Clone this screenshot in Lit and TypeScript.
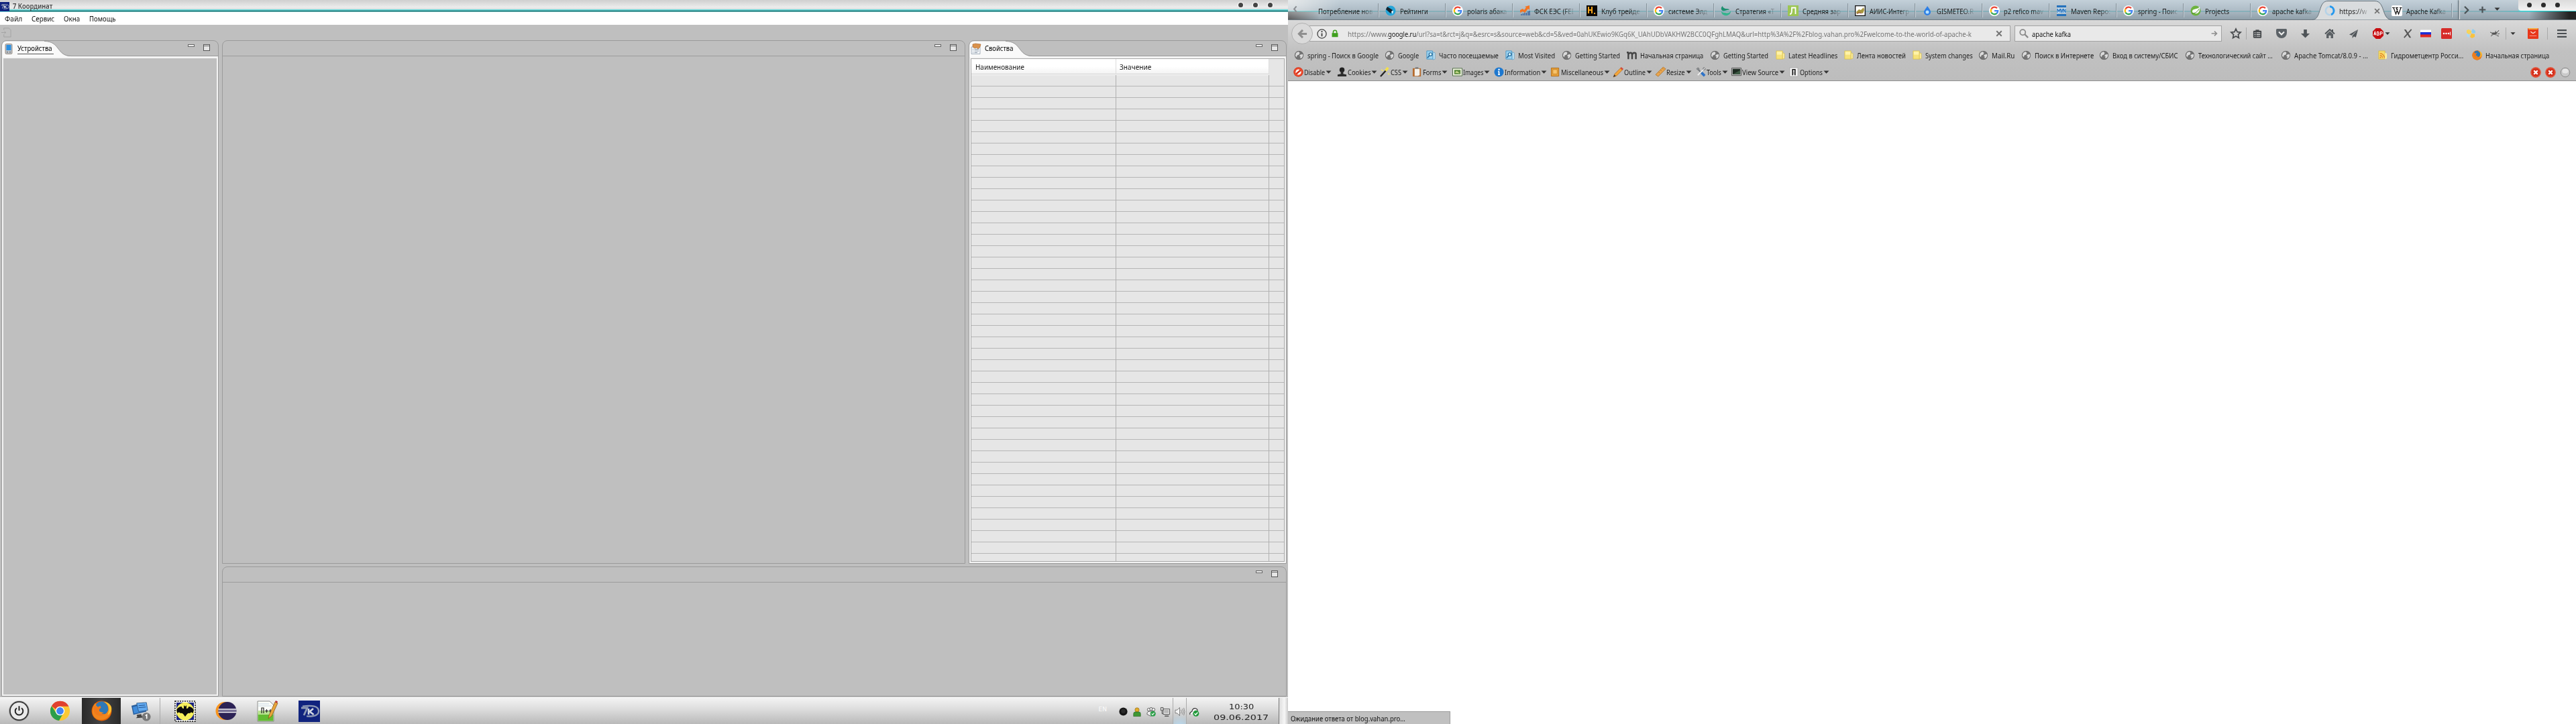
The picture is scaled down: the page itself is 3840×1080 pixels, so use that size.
import { LitElement, html, css, svg, nothing } from "lit";
import { customElement, property } from "lit/decorators.js";
import { styleMap } from "lit/directives/style-map.js";

/** A line of text condensed or widened so that it fills a given width. */
@customElement("fit-text")
class FitText extends LitElement {
  @property({ type: Number }) w = 0;
  @property() text = "";
  static styles = css`
    :host { display: inline-block; white-space: pre; }
    .t { display: inline-block; white-space: pre; transform-origin: 0 50%; }
  `;
  render() {
    return html`<span class="t">${this.text}</span>`;
  }
  updated() {
    const el = this.renderRoot.querySelector(".t") as HTMLElement;
    el.style.transform = "none";
    if (this.w) {
      this.style.width = `${this.w}px`;
      el.style.transform = `scaleX(${this.w / el.offsetWidth})`;
    }
  }
}

const fit = (text: string, w: number) => html`<fit-text .text=${text} .w=${w}></fit-text>`;

const shapes: Record<string, unknown> = {
  none: svg``,
  google: svg`<circle cx="8" cy="8" r="8" fill="#fff"/><g fill="none" stroke-width="2.3"><path d="M12 4.3A5.3 5.3 0 0 0 3.4 5.5" stroke="#ea4335"/><path d="M3.4 5.5a5.3 5.3 0 0 0 0 5" stroke="#fbbc05"/><path d="M3.4 10.5a5.3 5.3 0 0 0 8.2 1.4" stroke="#34a853"/><path d="M11.4 12a5 5 0 0 0 1.8-3.8H8" stroke="#4285f4"/></g>`,
  globe: svg`<circle cx="8" cy="8" r="7" fill="#747474"/><path d="M3 4l4-2 2 2-1 3-3 1-1 3-2-2zM10 7l4-1 .5 3-3 4-2-1 1-2-2-1z" fill="#dadada"/><circle cx="8" cy="8" r="6.6" fill="none" stroke="#666" stroke-width=".8"/>`,
  rate: svg`<circle cx="8" cy="8" r="7.500" fill="#27a5d8"/><path d="M3 2l8 5-3 5-7-6z" fill="#17252e"/><path d="M9 9l3-1-1 5z" fill="#fff"/>`,
  fsk: svg`<path d="M1 11V7l4-2 2 2 3-4-2-1 7-2v7l-2-2-5 6-3-2z" fill="#f47421"/><path d="M3 15v-2M5.500 15v-3M8 15v-4M10.500 15v-4M13 15V9M15 15V8" stroke="#2e5c9e" stroke-width="1.300"/>`,
  club: svg`<path d="M0 0h16v16H0z" fill="#0a0805"/><path d="M3 3v9M8 2v10M3 7h6M2 3h2" stroke="#f6a51c" stroke-width="2" fill="none"/><path d="M11 11h2v2h-2z" fill="#f6a51c"/>`,
  strat: svg`<path d="M3 1C0 3 0 7 3 8c3 1 7-2 10-1-1-3-6-1-8-3-1-1-2-1-2-3z" fill="#1c9070"/><path d="M1 9c0 5 5 7 9 6 3-1 5-3 5-7-2 4-5 4-8 3-2 0-4 0-6-2z" fill="#34b48d"/>`,
  lurk: svg`<path d="M0 0h16v16H0z" fill="#9cc653"/><path d="M3 13c3 0 3-3 3-9.500h5.500V13" fill="none" stroke="#fff" stroke-width="1.800"/>`,
  aiis: svg`<path d="M.7.7h14.600v14.600H.7z" fill="#fff" stroke="#111" stroke-width="1.300"/><path d="M2 10l4-4 3 1 4-4 1 4-2 5-4-1-5 2z" fill="#a8963e"/><path d="M3 12l4-1 3 1" stroke="#9d4b38" fill="none"/>`,
  drop: svg`<path d="M8 1c3 4 5 6 5 9a5 5 0 0 1-10 0c0-3 3-5 5-9z" fill="#2d7fe6"/><circle cx="8" cy="10" r="2.500" fill="#b7e2ff"/>`,
  mvn: svg`<path d="M1 0h14v3H1zM1 13h14v3H1z" fill="#2472bd"/><path d="M1 4h14v8H1z" fill="#c9dff0"/><path d="M2 11V5l2 4 2-4v6M7 5l1.500 6L10 5M11 11V5l3 6V5" fill="none" stroke="#2472bd" stroke-width="1.100"/>`,
  spring: svg`<circle cx="8" cy="8" r="7.500" fill="#6db33f"/><path d="M14 2c1 7-2 11-7 10-2 0-4-1-4-3 0-5 8-2 11-7z" fill="#fff"/><path d="M2 12c5 0 9-2 11-7" stroke="#4d8b2a" fill="none"/>`,
  load: svg`<circle cx="8" cy="8" r="6.200" fill="none" stroke="#b5d3e8" stroke-width="2.600"/><path d="M8 1.800a6.200 6.200 0 0 1 2 12" fill="none" stroke="#2699ee" stroke-width="3"/>`,
  wiki: svg`<rect width="16" height="16" rx="2" fill="#fff"/><path d="M1 3.500h4M6 3.500h4M12 3.500h3.500M3 3.500L6.500 13 9 5M14 3.500L10.500 13 7 3.500" fill="none" stroke="#111" stroke-width="1.200"/>`,
  often: svg`<path d="M2 1h9l1 13H2z" fill="#9bd2f0" stroke="#4a97c4"/><path d="M12 3l3 1v10l-3 1z" fill="#cdeafa" stroke="#4a97c4" stroke-width=".7"/><circle cx="8" cy="6.500" r="2.500" fill="#dff" stroke="#24679a" stroke-width="1.300"/><path d="M6 9l-3 3" stroke="#24679a" stroke-width="1.700"/>`,
  moz: svg`<path d="M2.500 14V3.500M8.500 14V6M14.500 14V6q0-2-2.500-2T8.500 7q0-3-2.500-3T2.500 7M0 3.500h3" fill="none" stroke="#444" stroke-width="2.600"/>`,
  folder: svg`<path d="M2 1h10v13H2z" fill="#f6e27a" stroke="#d8bd45" stroke-width=".7"/><path d="M12 4l3 1v8l-3 1z" fill="#fff0a0" stroke="#cdb33a" stroke-width=".6"/><path d="M3 2h8v5H3z" fill="#fff3a8"/>`,
  rss: svg`<path d="M2 1h10v13H2z" fill="#f6dc6c" stroke="#d1b33b" stroke-width=".7"/><path d="M12 4l3 1v8l-3 1z" fill="#fff0a0"/><path d="M4 5a7 7 0 0 1 7 7M4 8a4 4 0 0 1 4 4" stroke="#e4811c" stroke-width="1.400" fill="none"/><circle cx="4.800" cy="11.300" r="1.100" fill="#e4811c"/>`,
  firefox: svg`<circle cx="8" cy="8" r="7.700" fill="#e66000"/><circle cx="8.500" cy="6.500" r="5.800" fill="#2a6cab"/><path d="M9 1c3 1 4 3 4 6-1 4-4 4-5 3 2 0 2-1 1-2-2 1-3-1-3-2l2-1-2-1-3-2C0 6 0 12 4 14c6 3 12-2 11.500-8-.4-3-3-5-6.500-5z" fill="#f0861e"/><path d="M8 .8c3 1 5.300 3 5 6.500L11 10c-2-1-4-1-5-2l1-2-2-1-1.500-1.500C5 1.500 6 1 8 .8z" fill="#2f79b8"/><path d="M10 1.200c4 2 4.500 6 2.500 10 2.500-1 3.500-4 3-6-.8-2.500-3-4-5.500-4z" fill="#fbc02d"/><path d="M2 4l3 1 2-1 .5 1.500L6 7c-1 3 2 4 4 3-1 3-7 2-8-2z" fill="#f07a1c"/>`,
  ban: svg`<circle cx="8" cy="8" r="7.700" fill="#d6301a"/><circle cx="8" cy="8" r="4.600" fill="#fff"/><path d="M4 11.500L12 4.500" stroke="#d6301a" stroke-width="2.600"/><circle cx="8" cy="8" r="5.600" fill="none" stroke="#ef5130" stroke-width="2"/>`,
  cookie: svg`<circle cx="8" cy="4.500" r="4" fill="#222"/><path d="M6 7h4v4l5 1v3H1v-3l5-1z" fill="#2b2b2b"/>`,
  wand: svg`<path d="M1 15L11 4" stroke="#222" stroke-width="2.400"/><path d="M9 6l4-5" stroke="#f4e04a" stroke-width="4"/><path d="M2 4l3 2M13 10l2 2" stroke="#f7e763" stroke-width="1.600"/>`,
  forms: svg`<path d="M1 2h13v13H1z" fill="#b56b2e"/><path d="M4 3h8v10l-3 1H4z" fill="#f4f1ea"/><path d="M5 0h5v3H5z" fill="#888"/>`,
  images: svg`<path d="M.5 2h15v12H.5z" fill="#f2f4e4" stroke="#47663f"/><path d="M3 4.500h10v7H3z" fill="#5b8c3d"/><path d="M4 9l3-3 5 4z" fill="#c8d88a"/>`,
  info: svg`<circle cx="8" cy="8" r="7.500" fill="#1e78cf"/><path d="M8 7v5M6.500 7H8M6.500 12h3" stroke="#fff" stroke-width="1.800"/><circle cx="8" cy="4" r="1.300" fill="#fff"/>`,
  misc: svg`<path d="M1.500 1.500h12v13h-12z" fill="#e7a038" stroke="#b06c15"/><path d="M4 4h7v7H4z" fill="#f7c36a" stroke="#c07d20" stroke-width=".8"/>`,
  pencil: svg`<path d="M0 16l2-5L12 1l3 3L5 14z" fill="#f2a53a" stroke="#a35a1b" stroke-width=".6"/><path d="M11 2l1.500-2 3.500 3-2 2z" fill="#d34c3c"/><path d="M0 16l1.500-4 2.500 2z" fill="#333"/>`,
  ruler: svg`<path d="M0 12L12 0l4 3L4 15z" fill="#e9a650" stroke="#a96b22" stroke-width=".8"/><path d="M5 8l1.500 1.500M8 5l1.500 1.500M11 2l1.500 1.500" stroke="#8b561c" stroke-width=".7"/>`,
  tools: svg`<path d="M3 3l10 11" stroke="#6d7379" stroke-width="2"/><path d="M14 2L3 13" stroke="#eee" stroke-width="2"/><path d="M9 9l5 5" stroke="#2e73c9" stroke-width="4"/><path d="M1 3l2-2 2 1v2L4 5zM11 4l1-3 2 0M12 5l3-1V2" fill="#8c9298" stroke="#777"/>`,
  screen: svg`<path d="M.5 1.500h15v12H.5z" fill="#bbb" stroke="#555"/><path d="M2 3h12v8.500H2z" fill="#1e2b22"/><path d="M2 11.500L14 5v6.500z" fill="#3c5a43"/>`,
  options: svg`<path d="M1 1h13v14H1z" fill="#f3f3f3" stroke="#aaa"/><path d="M5.500 13V4h4v9" fill="none" stroke="#111" stroke-width="1.600"/><path d="M7.500 7v5" stroke="#777"/>`,
  star: svg`<path d="M8 1l2.100 4.600 5 .6-3.700 3.400 1 5L8 12.100l-4.400 2.500 1-5L.9 6.200l5-.6z" fill="none" stroke="#46494c" stroke-width="1.700"/>`,
  clip: svg`<rect x="1" y="2.500" width="14" height="12.500" rx="1.500" fill="#46494c"/><path d="M5 1h6v3H5z" fill="#46494c"/><path d="M3 6h2M6.500 6H13M3 9h2M6.500 9H13M3 12h2M6.500 12H13" stroke="#dcdcdc" stroke-width="1.400"/>`,
  pocket: svg`<path d="M0 2.500Q0 1 1.500 1h13Q16 1 16 2.500V7a8 8 0 0 1-16 0z" fill="#5c6267"/><path d="M4 5.500l4 4 4-4" fill="none" stroke="#eee" stroke-width="2"/>`,
  down: svg`<path d="M5.500 1h5v6.500H15L8 14.500 1 7.500h4.500z" fill="#4f5458"/>`,
  home: svg`<path d="M1 8.500L8 2l7 6.500" fill="none" stroke="#4f5458" stroke-width="2"/><path d="M3 9l5-4.500L13 9v6H9.500v-4h-3v4H3z" fill="#5c6165"/><path d="M11 2h2v4l-2-2z" fill="#4f5458"/>`,
  send: svg`<path d="M15 1L1 9l4 1.500zM15 1L6 11v4l2.500-3 3 1.500z" fill="#505559"/>`,
  abp: svg`<path d="M4.800 0h6.400L16 4.800v6.400L11.200 16H4.800L0 11.200V4.800z" fill="#c70d10"/><path d="M1.800 10.500L3.300 5.500l1.500 5M2.300 9h2M6.500 5.500v5H8q1.500 0 1.500-1.300T8 8q1.200 0 1.200-1.200T8 5.500zM11.500 10.500v-5H13q1.300 0 1.300 1.400T13 8.300h-1.500" fill="none" stroke="#fff" stroke-width="1.100"/>`,
  ex: svg`<path d="M2 1l3 0 9 14h-3z" fill="#555"/><path d="M14.500 1L2 15" stroke="#555" stroke-width="2"/>`,
  flag: svg`<path d="M0 2.500h16v4H0z" fill="#fff"/><path d="M0 6h16v4H0z" fill="#1d2fd6"/><path d="M0 9.500h16v4H0z" fill="#e02a22"/>`,
  dots: svg`<rect width="16" height="16" rx="1.500" fill="#d62b28"/><g fill="#fff"><circle cx="4" cy="8" r="1.300"/><circle cx="7.500" cy="8" r="1.300"/><circle cx="11" cy="8" r="1.300"/><path d="M13 5.500h1v5h-1z"/></g>`,
  cubes: svg`<path d="M5 2l4 2v4L5 9 2 7V3z" fill="#f7d45a"/><path d="M11 1l4 3v3l-4 1-2-3z" fill="#8fcdf0"/><path d="M2 8l4 2v4l-4-2z" fill="#a9d8f5"/><path d="M9 8l5 1v4l-4 2-3-2z" fill="#f9c23c"/>`,
  bug: svg`<path d="M3 9l5-2 4-1 2-3M5 6l3 4M9 4l1 7M2 12l4-3M1 6l5 2M12 9l3-1M11 11l3 1" fill="none" stroke="#555" stroke-width="1"/><path d="M4 9q3-4 8-2-3 4-8 2z" fill="#555"/>`,
  ali: svg`<rect width="16" height="16" rx="1" fill="#e8371b"/><path d="M1 0h14v2H1z" fill="#f7a63a"/><path d="M4.500 5q3.500 5 7 0" fill="none" stroke="#fff" stroke-width="1.300"/><path d="M3 11.500h10" stroke="#fbb" stroke-width="1.200" stroke-dasharray="1.500 .6"/>`,
  menu: svg`<path d="M0 2.500h16M0 8h16M0 13.500h16" stroke="#4a4e51" stroke-width="2.500"/>`,
  err: svg`<circle cx="8" cy="8" r="7.700" fill="#d4301c"/><circle cx="8" cy="8" r="7" fill="none" stroke="#ef6a4b"/><path d="M5.300 5.300l5.400 5.400M10.700 5.300l-5.400 5.400" stroke="#fff" stroke-width="2.200"/>`,
  grey: svg`<circle cx="8" cy="8" r="6.800" fill="#c9c9c9" stroke="#8b8b8b"/><ellipse cx="8" cy="6" rx="4.500" ry="3.500" fill="#e6e6e6"/>`,
  caret: svg`<path d="M1 4.500h14L8 12z" fill="#333"/>`,
  right: svg`<path d="M1 8h12M8 2.500L13.500 8 8 13.500" fill="none" stroke="#8d8d8d" stroke-width="2.600"/>`,
  left: svg`<path d="M15 8H3M8.500 2L2.500 8l6 6" fill="none" stroke="#8f8f8f" stroke-width="3.200"/>`,
  chevL: svg`<path d="M11 2L6 8l5 6" fill="none" stroke="#8b9094" stroke-width="3"/>`,
  chevR: svg`<path d="M4 1l7 7-7 7" fill="none" stroke="#4b5357" stroke-width="3"/>`,
  plus: svg`<path d="M8 1v14M1 8h14" stroke="#4b5357" stroke-width="3.200"/>`,
  cross: svg`<path d="M2 2l12 12M14 2L2 14" stroke="#737373" stroke-width="3"/>`,
  lens: svg`<circle cx="6" cy="6" r="4.600" fill="none" stroke="#8a8a8a" stroke-width="2"/><path d="M9.500 9.500l5.500 5.500" stroke="#8a8a8a" stroke-width="2.600"/>`,
  site: svg`<circle cx="8" cy="8" r="7" fill="none" stroke="#444" stroke-width="1.400"/><path d="M8 7v5" stroke="#444" stroke-width="2"/><circle cx="8" cy="4.500" r="1.200" fill="#444"/>`,
  lock: svg`<path d="M2 7h12v8H2z" fill="#3fa01e"/><path d="M4.500 8V5a3.500 3.500 0 0 1 7 0v3" fill="none" stroke="#3fa01e" stroke-width="2"/>`,
  pda: svg`<rect x="3" y=".5" width="10" height="15" rx="1.500" fill="#b9c0c8" stroke="#8c7a68" stroke-width=".8"/><path d="M4.500 2h7v8h-7z" fill="#2c8fe0"/><circle cx="6" cy="12.800" r="1" fill="#777"/><circle cx="10" cy="12.800" r="1" fill="#777"/>`,
  props: svg`<path d="M1 5h13v10.500H1z" fill="#f2f5f8" stroke="#93a0ad" stroke-width=".8"/><path d="M3 8.500h1M5.500 8.500H12M3 11h1M5.500 11H12M3 13.500h1M5.500 13.500H10" stroke="#8a98a8"/><path d="M3 1l4-1 8 1-1 4-3 3-2-2-3 1-3-2z" fill="#d9924c" stroke="#a9632a" stroke-width=".6"/>`,
  exit: svg`<path d="M4 4V1h8l3 3v11H4v-4M0 8h7M5 6l2 2-2 2" fill="none" stroke="#a2a2a2"/>`,
  seven: svg`<path d="M0 0h16v16H0z" fill="#10237e"/><path d="M2 5.500h4.500L4 11" fill="none" stroke="#8e9ab5" stroke-width="1.400"/><path d="M7.500 6v4.500M11 6L8.300 8.200l3 2.300" fill="none" stroke="#d0d6e2" stroke-width="1.300"/><path d="M3 4.300q11.500-1.500 12 3.200T6 11.700" fill="none" stroke="#8e9ab5" stroke-width="1.200"/>`,
  power: svg`<circle cx="16" cy="16" r="15.800" fill="#000" opacity=".25"/><circle cx="16" cy="16" r="14" fill="#e9e9e9" stroke="#333" stroke-width="1.800"/><path d="M12.300 11.500a6 6 0 1 0 7.400 0M16 8.500v7" fill="none" stroke="#222" stroke-width="2"/>`,
  chrome: svg`<circle cx="16" cy="16" r="15" fill="#fbc934"/><path d="M3 8.500A15 15 0 0 1 29.500 9H16a7 7 0 0 0-6.500 4.500z" fill="#e0412f"/><path d="M3 8.500A15 15 0 0 0 14.500 31l6-10.500a7 7 0 0 1-10.500-1.500z" fill="#2c9e4b"/><circle cx="16" cy="16" r="7" fill="#fff"/><circle cx="16" cy="16" r="5.600" fill="#4285f4"/>`,
  remote: svg`<path d="M2 8l19-5 4 14-20 5z" fill="#295e9c"/><path d="M4 10l16-4 3 10-17 4z" fill="#3f8bda"/><path d="M10 4l15-1 2 12-14 2z" fill="#62aaf0" stroke="#264f7c" stroke-width=".8"/><path d="M13 8l10-1M13 11l11-1" stroke="#1f5190"/><path d="M10 22l7-1 1 3 5 2-14 1 2-2z" fill="#444"/><circle cx="25" cy="25" r="6.500" fill="#777"/><path d="M23.500 23.300l2-1.500V28" fill="none" stroke="#fff" stroke-width="1.700"/>`,
  bat: svg`<path d="M1 1h30v30H1z" fill="#fff" stroke="#111" stroke-width="1.600" stroke-dasharray="2 1.500"/><path d="M3 3h26v26H3z" fill="#1a237e"/><circle cx="16" cy="16" r="13.300" fill="#f6ef5c"/><path d="M3 14q3-5 8-5 0 3 3 3V7l2 2 2-2v5q3 0 3-3 5 0 8 5-1 3-1 5-3-3-5 0-2-1-4 1l-3 4-3-4q-2-2-4-1-2-3-5 0 0-2-1-5z" fill="#0b0b0b"/>`,
  eclipse: svg`<circle cx="14" cy="16" r="14" fill="#f7941e"/><circle cx="18" cy="16" r="14" fill="#2c2255"/><path d="M4 13.500h28M4 18h28" stroke="#fff" stroke-width="1.600"/><path d="M4 15.700h28" stroke="#c9c5dd" stroke-width="1"/>`,
  npp: svg`<path d="M1 1h18l6 6v24H1z" fill="#fbfdf8" stroke="#777" stroke-width=".8"/><path d="M1.500 18h23v12.500h-23z" fill="#62bb32"/><path d="M1.500 15h23v6h-23z" fill="#b8e290"/><path d="M2 5h16M2 8h20" stroke="#bcd" stroke-width=".8"/><path d="M7 19v-8h3v8M12 15.500h5M14.500 13v5M18 15.500h4M20 13v5" fill="none" stroke="#222" stroke-width="1.200"/><path d="M17 27l1-5L27 2l4 2-9 19z" fill="#e8a53b" stroke="#805018" stroke-width=".7"/><path d="M27 2l1-2 3 1.500-1 2.500z" fill="#b33"/>`,
  blob: svg`<circle cx="8" cy="8" r="7.500" fill="#161616"/><circle cx="8" cy="7" r="4" fill="#2b2b2b"/>`,
  man: svg`<circle cx="8" cy="4.500" r="3.600" fill="#e2ab2c" stroke="#87640e" stroke-width=".7"/><path d="M2 15.500V11q0-3 3-3h6q3 0 3 3v4.500z" fill="#3f9834" stroke="#245e1e" stroke-width=".7"/>`,
  group: svg`<g fill="#eee" stroke="#555"><circle cx="4" cy="4" r="2.500"/><circle cx="8" cy="3" r="2.500"/><circle cx="12" cy="4" r="2.500"/><path d="M1 12q0-5 4-5h6q4 0 4 5-4 3-8 3z"/></g><circle cx="11" cy="11" r="4.500" fill="#2da04a"/><path d="M8.800 11l1.700 1.700 2.800-3.200" stroke="#fff" fill="none" stroke-width="1.300"/>`,
  net: svg`<path d="M4.500 3h11v9h-11z" fill="#eee" stroke="#444"/><path d="M6 4.500h8V10H6z" fill="#b9b9b9"/><path d="M7 15h7" stroke="#444" stroke-width="1.600"/><path d="M.5.500h4v5h-4z" fill="#ddd" stroke="#444"/><path d="M2.500 6v5h2" fill="none" stroke="#444"/>`,
  sound: svg`<path d="M1 5.500h3L8 1.500v13l-4-4H1z" fill="#f4f4f4" stroke="#777"/><path d="M10 5q2 3 0 6M12.300 3.500q3 4.500 0 9M14.500 2q3 6 0 12" fill="none" stroke="#888"/>`,
  cloud: svg`<path d="M1 13q-1-4 3-5 1-6 6-5 3 1 3 4" fill="#f3f3f3" stroke="#333" stroke-width="1.200"/><circle cx="10.500" cy="11" r="4.800" fill="#229a3b"/><path d="M8 11l2 2 3.200-3.600" stroke="#fff" fill="none" stroke-width="1.500"/>`,
};

const big = new Set(["power", "chrome", "remote", "bat", "eclipse", "npp"]);
const icon = (name: string, w = 16, h = w) => {
  const s = big.has(name) ? 32 : 16;
  return html`<svg class="ic" width=${w} height=${h} viewBox="0 0 ${s} ${s}">${shapes[name]}</svg>`;
};

const base = css`
  * { box-sizing: border-box; }
  .ic { display: block; flex: none; overflow: visible; }
  fit-text { flex: none; }
`;

@customElement("view-panel")
class ViewPanel extends LitElement {
  @property() label = "";
  @property() glyph = "";
  @property({ type: Number }) tab = 0;
  @property({ type: Number }) lw = 0;
  @property({ type: Boolean }) underline = false;
  static styles = [base, css`
    :host { display: flex; flex-direction: column; border: 1px solid #9b9b9b; border-radius: 8px 8px 0 0; overflow: hidden; box-sizing: border-box; background: #bfbfbf; }
    .head { height: 23px; flex: none; border-bottom: 1px solid #9b9b9b; display: flex; position: relative; }
    .curve { position: absolute; left: 0; top: 0; }
    .tab { position: relative; display: flex; align-items: center; gap: 5px; padding: 1px 0 0 2px; color: #000; font-size: 11px; }
    .label { line-height: 15px; border-bottom: 1px solid transparent; height: 17px; padding-right: 2px; }
    .label.u { border-color: #555; }
    .btns { margin-left: auto; display: flex; gap: 13px; padding: 5px 12px 0 0; }
    .min { width: 10px; height: 4px; border: 1px solid #666; background: #eee; }
    .max { width: 10px; height: 10px; border: 1px solid #555; background: #e6e6e6; box-shadow: inset 0 1px #eee, inset 0 2px #666; }
    .body { flex: 1; min-height: 0; display: flex; }
    .body.framed { border: 2px solid #f4f4f4; border-top-width: 3px; }
    ::slotted(*) { flex: 1; }
  `];
  render() {
    const t = this.tab;
    return html`
      <div class="head">
        ${t ? html`<svg class="curve" width=${t + 4} height="24"><path d="M0 24V6Q0 .5 7 .5H${t - 38}C${t - 14} .5 ${t - 20} 23 ${t + 2} 23V24z" fill="#f9f9f9"/><path d="M${t - 38} .5C${t - 14} .5 ${t - 20} 22.500 ${t + 2} 22.500" fill="none" stroke="#999"/></svg>
          <div class="tab">${icon(this.glyph)}<span class="label ${this.underline ? "u" : ""}">${fit(this.label, this.lw)}</span></div>` : nothing}
        <div class="btns"><div class="min"></div><div class="max"></div></div>
      </div>
      <div class="body ${t ? "framed" : ""}"><slot></slot></div>`;
  }
}

@customElement("coord-window")
class CoordWindow extends LitElement {
  static styles = [base, css`
    :host { display: flex; flex-direction: column; width: 1920px; height: 1040px; background: #bfbfbf; font-family: "Noto Sans", "Open Sans", sans-serif; font-size: 11px; color: #222; }
    .title { height: 18px; flex: none; display: flex; align-items: center; background: linear-gradient(#cfcfcf, #ececec 60%, #d9dede 14px, #60d4d6 14px, #60d4d6 16px, #0e3a3a 16px, #0e4040 17px, #7be0e0 17px); padding-bottom: 1px; font-weight: 600; font-size: 11.5px; color: #444; gap: 5px; }
    .title .ic { margin-top: 2px; }
    .dots { margin-left: auto; display: flex; gap: 15px; padding: 0 23px 2px 0; }
    .dot { width: 7px; height: 7px; border-radius: 50%; background: #444; box-shadow: 0 0 1px 1px #fff; }
    .menu { height: 19px; flex: none; background: #fff; display: flex; align-items: center; padding: 0 0 0 7px; gap: 14px; font-size: 11px; color: #111; }
    .tools { height: 23px; flex: none; padding: 4px 0 0 2px; }
    .work { flex: 1; min-height: 0; display: flex; gap: 5px; padding: 0 2px 1px; }
    .dev { width: 324px; }
    .main { flex: 1; display: flex; flex-direction: column; gap: 4px; }
    .row { height: 781px; display: flex; gap: 5px; }
    .edit { width: 1108px; }
    .prop { flex: 1; }
    .log { flex: 1; }
    .grid { border: 1px solid #a9a9a9; background: #e6e6e6; display: grid; grid-template-columns: 216px 228px 1fr; grid-template-rows: 24px 1fr; }
    .th { background: linear-gradient(#fff 50%, #f1f1f1); border-bottom: 1px solid #fff; box-shadow: inset 0 -1px #ccc; padding: 4px 0 0 6px; line-height: 16px; border-right: 1px solid #ddd; }
    .th + .th { padding-left: 5px; }
    .th.last { background: #e6e6e6; box-shadow: none; border: 0; }
    .td { background: repeating-linear-gradient(#e6e6e6 0 16px, #b6b6b6 16px 17px); border-right: 1px solid #b0b0b0; }
    .td.last { border-right: 0; }
  `];
  render() {
    return html`
      <div class="title">${icon("seven", 14, 14)}${fit("7 Координат", 59)}
        <div class="dots">${[1, 2, 3].map(() => html`<div class="dot"></div>`)}</div></div>
      <div class="menu">${fit("Файл", 26)}${fit("Сервис", 34)}${fit("Окна", 24)}${fit("Помощь", 39)}</div>
      <div class="tools">${icon("exit", 15, 15)}</div>
      <div class="work">
        <view-panel class="dev" label="Устройства" glyph="pda" .tab=${101} .lw=${52} underline></view-panel>
        <div class="main">
          <div class="row">
            <view-panel class="edit"></view-panel>
            <view-panel class="prop" label="Свойства" glyph="props" .tab=${92} .lw=${42}>
              <div class="grid">
                <div class="th">${fit("Наименование", 73)}</div><div class="th">${fit("Значение", 47)}</div><div class="th last"></div>
                <div class="td"></div><div class="td"></div><div class="td last"></div>
              </div>
            </view-panel>
          </div>
          <view-panel class="log"></view-panel>
        </div>
      </div>`;
  }
}

@customElement("task-bar")
class TaskBar extends LitElement {
  static styles = [base, css`
    :host { display: flex; height: 40px; width: 1920px; background: linear-gradient(#f3f3f3, #dcdcdc 45%, #b9b9b9); font-family: "DejaVu Sans", sans-serif; color: #222; border-top: 1px solid #fafafa; box-sizing: border-box; }
    .app { display: flex; align-items: center; justify-content: center; width: 58px; height: 39px; }
    .start { width: 56px; }
    .app.active { background: linear-gradient(90deg, #2a2a2a, #444 50%, #2a2a2a); margin: 0 0 0 4px; }
    .first { margin-left: 4px; }
    .sep { width: 1px; background: #aaa; margin-right: 7.5px; }
    .sp { margin-right: 3.7px; }
    .tray { margin-left: auto; display: flex; align-items: center; gap: 7px; padding-top: 2px; }
    .lang { font-size: 9px; color: #fafafa; margin-right: 11px; padding-bottom: 8px; }
    .snd { background: radial-gradient(circle at 50% 115%, #b9e0fa, transparent 45%); align-self: stretch; display: flex; align-items: center; border: solid #aaa; border-width: 0 1px; margin: -2px -3px 0; padding: 2px 2px 0; }
    .clock { display: flex; flex-direction: column; align-items: center; width: 84px; margin: 0 14px 0 13px; font-size: 10.5px; line-height: 16px; }
    .show { width: 14px; border-left: 1px solid #777; background: linear-gradient(90deg, #ddd, #f6f6f6 60%, #ccc); }
  `];
  render() {
    return html`
      <div class="app start">${icon("power", 31)}</div>
      <div class="app first">${icon("chrome", 31)}</div>
      <div class="app active">${icon("firefox", 31)}</div>
      <div class="app">${icon("remote", 31)}</div>
      <div class="sep"></div>
      <div class="app sp">${icon("bat", 32)}</div>
      <div class="app sp">${icon("eclipse", 32, 31)}</div>
      <div class="app sp">${icon("npp", 32)}</div>
      <div class="app">${icon("seven", 32)}</div>
      <div class="tray">
        <span class="lang">EN</span>${icon("blob", 13)}
        ${icon("man", 14)}${icon("group", 14)}${icon("net", 14)}
        <span class="snd">${icon("sound", 15)}</span>${icon("cloud", 15)}
        <div class="clock">${fit("10:30", 37)}${fit("09.06.2017", 82)}</div>
      </div>
      <div class="show"></div>`;
  }
}

type Item = [string, string, number, number];

/* glyph, caption, caption width */
const tabs: [string, string, number][] = [
  ["rate", "Рейтинги", 42], ["google", "polaris абака", 59], ["fsk", "ФСК ЕЭС (FEI", 59], ["club", "Клуб трейде", 58],
  ["google", "системе Элд", 58], ["strat", "Стратегия «Т", 58], ["lurk", "Средняя зар", 57], ["aiis", "АИИС-Интегр", 59],
  ["drop", "GISMETEO.R", 55], ["google", "p2 refico mav", 59], ["mvn", "Maven Repo:", 59], ["google", "spring - Поис", 59],
  ["spring", "Projects", 36], ["google", "apache kafka", 59],
];

/* glyph, caption, caption width, item pitch */
const marks: Item[] = [
  ["globe", "spring - Поиск в Google", 106, 135], ["globe", "Google", 31, 61], ["often", "Часто посещаемые", 89, 118],
  ["often", "Most Visited", 55, 85], ["globe", "Getting Started", 67, 96.5], ["moz", "Начальная страница", 94, 124.5],
  ["globe", "Getting Started", 67, 97], ["folder", "Latest Headlines", 73, 102], ["folder", "Лента новостей", 73, 102],
  ["folder", "System changes", 71, 99], ["globe", "Mail.Ru", 34, 63.5], ["globe", "Поиск в Интернете", 88, 116.5],
  ["globe", "Вход в систему/СБИС", 98, 128], ["globe", "Технологический сайт ...", 111, 143],
  ["globe", "Apache Tomcat/8.0.9 - ...", 110, 144], ["rss", "Гидрометцентр Росси...", 108, 141], ["firefox", "Начальная страница", 95, 130],
];

const devtools: Item[] = [
  ["ban", "Disable", 31, 64.5], ["cookie", "Cookies", 34, 64.5], ["wand", "CSS", 16, 48], ["forms", "Forms", 27, 59.5],
  ["images", "Images", 30, 62], ["info", "Information", 53, 84], ["misc", "Miscellaneous", 63, 94], ["pencil", "Outline", 32, 63.5],
  ["ruler", "Resize", 28, 59.5], ["tools", "Tools", 22, 53.5], ["screen", "View Source", 54, 85.5], ["options", "Options", 34, 60],
];

@customElement("fox-window")
class FoxWindow extends LitElement {
  static styles = [base, css`
    :host { display: flex; flex-direction: column; width: 1920px; height: 1080px; background: #fff; font-family: "Noto Sans", "Open Sans", sans-serif; font-size: 11px; color: #1c1c1c; }
    .strip { height: 30px; flex: none; display: flex; position: relative; border-bottom: 1px solid #6c7880;
      background: radial-gradient(ellipse 80px 40px at 0 0, #e6e9ea, transparent), linear-gradient(90deg, #222 0, rgba(34,34,34,0) 48px, rgba(34,34,34,0) 1850px, #222 1910px) 0 17px / 100% 13px no-repeat, linear-gradient(90deg, #19d3d3, rgba(70,160,170,.35) 70px, rgba(70,160,170,.35) 1800px, #19d3d3) 0 16px / 100% 2px no-repeat, linear-gradient(#c3d0d9, #afbdc7 50%, #8f9fa9); }
    .scroll { width: 35px; padding: 8px 0 0 5px; }
    .tab { width: 100px; display: flex; align-items: center; gap: 6px; padding: 3px 0 0 10px; position: relative; }
    .tab::after { content: ""; position: absolute; right: 0; top: 5px; bottom: 3px; width: 1px; background: #87949d; box-shadow: 1px 0 #c3ced5; }
    .cap { flex: none; }
    .cap.long { -webkit-mask-image: linear-gradient(270deg, rgba(0,0,0,.15), #000 16px); mask-image: linear-gradient(270deg, rgba(0,0,0,.15), #000 16px); }
    .active::after, .pre::after { display: none; }
    .active > * { position: relative; }
    .active .shape { position: absolute; left: -8px; top: 0; }
    .active .x { margin-left: 4px; }
    .after { display: flex; align-items: flex-start; gap: 12px; padding: 9px 0 0 4px; border-left: 1px solid #e3e8ea; margin-left: 11px; box-shadow: -2px 0 2px #77848c; }
    .wc { position: absolute; right: 0; top: 0; width: 86px; height: 17px; background: linear-gradient(#dcdcdc, #f2f2f2); border-bottom: 1px solid #3ce0e0; border-bottom-left-radius: 4px; display: flex; gap: 14px; padding: 4px 0 0 13px; }
    .dot { width: 7px; height: 7px; border-radius: 50%; background: #2c2c2c; }
    .chrome { height: 91px; flex: none; background: linear-gradient(#d9d9d9, #c1c1c1 45px, #bdbdbd); border-bottom: 1px solid #8e8e8e; display: flex; flex-direction: column; }
    .nav { height: 40px; display: flex; align-items: center; padding-left: 5px; }
    .back { width: 32px; height: 32px; border-radius: 50%; border: 1px solid #b1b1b1; background: #dadada; display: flex; align-items: center; justify-content: center; position: relative; z-index: 1; }
    .url { height: 24px; width: 1045px; margin-left: -5px; border: 1px solid #a3a3a3; background: #e9e9e9; display: flex; align-items: center; padding: 0 11px 0 10px; color: #757575; }
    .url .lk { margin: 0 13px 0 6px; }
    .url b { font-weight: normal; color: #111; }
    .url .stop { margin-left: auto; }
    .find { height: 24px; width: 309px; margin-left: 6px; border: 1px solid #a3a3a3; background: #e9e9e9; display: flex; align-items: center; padding: 0 5px 0 6px; gap: 5px; color: #111; }
    .find .go { margin-left: auto; }
    .acts { flex: 1; display: grid; align-items: center; justify-items: center; margin-left: 10px; grid-template-columns: 22px 9px 23px 49px 23px 49px 23px 15px 19px 10px 14px 22px 32px 30px 42px 30px 2px 20px 40px 2px 1fr; }
    .v { width: 1px; height: 18px; background: #a9a9a9; }
    .marks { height: 24px; display: flex; align-items: center; padding: 0 0 1px 9px; margin-top: 1px; }
    .mark { display: flex; align-items: center; gap: 5px; flex: none; }
    .devs { height: 25px; display: flex; align-items: center; padding-left: 8px; }
    .dev { display: flex; align-items: center; gap: 1px; flex: none; }
    .errs { margin-left: auto; display: flex; gap: 6px; padding-right: 8px; }
    .page { flex: 1; display: flex; align-items: flex-end; }
    .status { width: 242px; height: 19px; background: #c0c0c0; border: 1px solid #9c9c9c; border-width: 1px 1px 0 0; padding: 2px 0 0 4px; line-height: 16px; color: #111; }
  `];
  private wide(w: number) {
    return styleMap({ width: `${w}px` });
  }
  private cap(text: string, w: number) {
    return html`<span class="cap ${w > 50 ? "long" : ""}">${fit(text, w)}</span>`;
  }
  render() {
    return html`
      <div class="strip">
        <div class="scroll">${icon("chevL", 11)}</div>
        <div class="tab">${this.cap("Потребление нов", 81)}</div>
        ${tabs.map(([g, t, w], i) => html`<div class="tab ${i === tabs.length - 1 ? "pre" : ""}">${icon(g)}${this.cap(t, w)}</div>`)}
        <div class="tab active">
          <svg class="shape" width="118" height="30"><path d="M0 29.500C14 29 8 1.500 23 1.500H93C109 1.500 103 29 118 29.500V30H0z" fill="#d9dcde" stroke="#65727a" stroke-width="1"/></svg>
          ${icon("load")}<span class="cap long">${fit("https://w", 42)}</span><span class="x">${icon("cross", 9)}</span>
        </div>
        <div class="tab">${icon("wiki")}${this.cap("Apache Kafka", 59)}</div>
        <div class="after">${icon("chevR", 12)}${icon("plus", 11)}${icon("caret", 9)}</div>
        <div class="wc"><div class="dot"></div><div class="dot"></div><div class="dot"></div></div>
      </div>
      <div class="chrome">
        <div class="nav">
          <div class="back">${icon("left", 15)}</div>
          <div class="url">${icon("site", 15)}<span class="lk">${icon("lock", 12)}</span>${fit("https://www.", 60)}<b>${fit("google.ru", 42)}</b>${fit("/url?sa=t&rct=j&q=&esrc=s&source=web&cd=5&ved=0ahUKEwio9KGq6K_UAhUDbVAKHW2BCC0QFghLMAQ&url=http%3A%2F%2Fblog.vahan.pro%2Fwelcome-to-the-world-of-apache-k", 828)}
            <span class="stop">${icon("cross", 10)}</span></div>
          <div class="find">${icon("lens", 14)}${fit("apache kafka", 58)}<span class="go">${icon("right", 10)}</span></div>
          <div class="acts">${icon("star")}<i class="v"></i>${icon("clip", 14, 15)}${icon("pocket")}${icon("down", 15)}${icon("home")}${icon("send", 15)}<i></i>${icon("abp")}${icon("caret", 8)}<i></i>${icon("ex", 14)}${icon("flag")}${icon("dots")}${icon("cubes")}${icon("bug")}<i class="v"></i>${icon("caret", 8)}${icon("ali")}<i class="v"></i>${icon("menu", 16, 14)}</div>
        </div>
        <div class="marks">${marks.map(([g, t, w, p]) => html`<div class="mark" style=${this.wide(p)}>${icon(g, 15)}${fit(t, w)}</div>`)}</div>
        <div class="devs">
          ${devtools.map(([g, t, w, p]) => html`<div class="dev" style=${this.wide(p)}>${icon(g, 15)}${fit(t, w)}${icon("caret", 9)}</div>`)}
          <div class="errs">${icon("err")}${icon("err")}${icon("grey")}</div>
        </div>
      </div>
      <div class="page"><div class="status">${fit("Ожидание ответа от blog.vahan.pro...", 171)}</div></div>`;
  }
}

@customElement("app-root")
class AppRoot extends LitElement {
  static styles = css`
    :host { display: flex; width: 3840px; height: 1080px; overflow: hidden; background: #fff; }
    .left { display: flex; flex-direction: column; }
  `;
  render() {
    return html`<div class="left"><coord-window></coord-window><task-bar></task-bar></div><fox-window></fox-window>`;
  }
}
